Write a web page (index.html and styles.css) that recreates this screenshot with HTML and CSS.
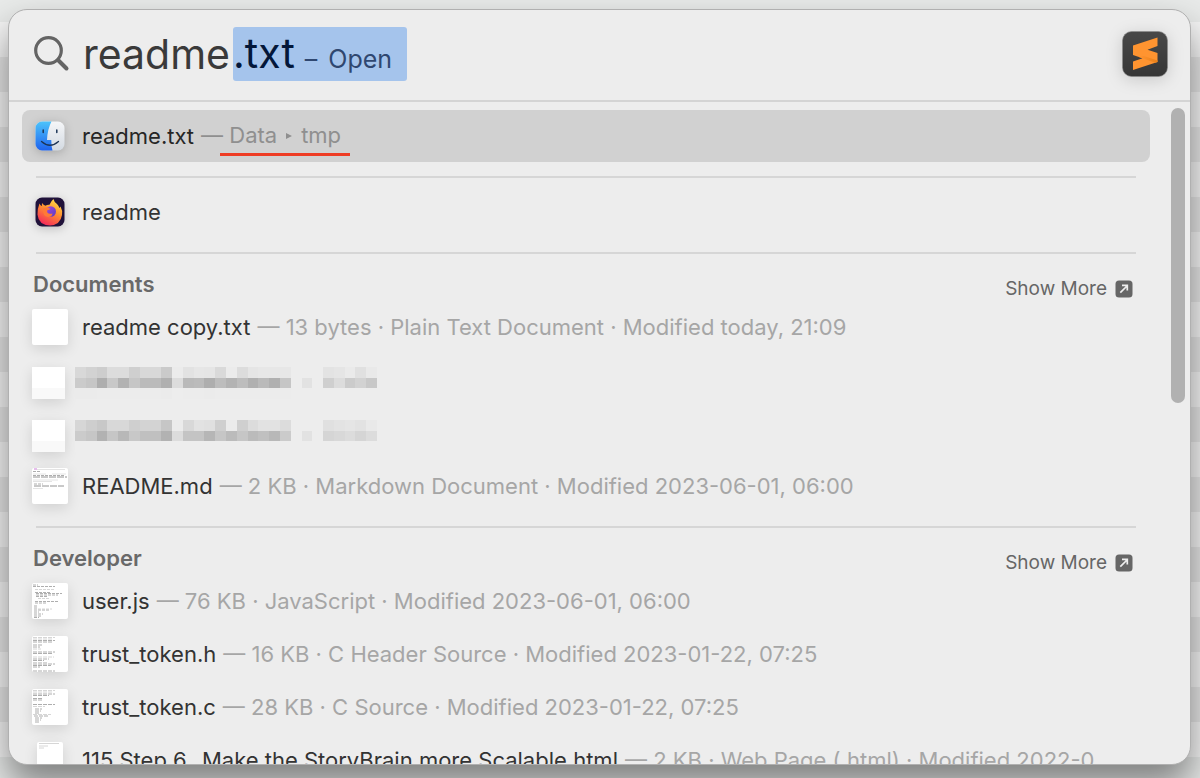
FILE: index.html
```
<!DOCTYPE html>
<html lang="en">
<head>
    <meta charset="UTF-8">
    <meta name="viewport" content="width=device-width, initial-scale=1.0">
    <title>Search</title>
    <link rel="stylesheet" href="styles.css">
</head>
<body>
    <svg class="defs" width="0" height="0">
        <symbol id="open-arrow" viewBox="0 0 18 18">
            <rect x="0.5" y="0.5" width="17" height="17" rx="3.5" fill="#666"/>
            <path d="M5.3 12.7 12 6M7 5.3h5.3v5.3" fill="none" stroke="#ededed" stroke-width="1.7"/>
        </symbol>
    </svg>
    <main class="panel">
        <div class="search-bar">
            <svg class="search-icon" viewBox="0 0 36 36">
                <circle cx="14.5" cy="14.5" r="12.8" fill="none" stroke="#646464" stroke-width="3.2"/>
                <path d="M24.5 24.5 32.500 32.500" stroke="#646464" stroke-width="4" stroke-linecap="round"/>
            </svg>
            <label class="query">
                <input type="text" class="query-input" value="readme" aria-label="Search">
                <span class="completion">.txt<span class="completion-action"><span>–</span><span>Open</span></span></span>
            </label>
            <svg class="app-icon" viewBox="0 0 46 46">
                <defs>
                    <linearGradient id="app-bg" x1="0" y1="0" x2="0" y2="1">
                        <stop offset="0" stop-color="#484848"/>
                        <stop offset="1" stop-color="#363636"/>
                    </linearGradient>
                    <linearGradient id="app-fold" x1="0" y1="0" x2="1" y2="0">
                        <stop offset="0" stop-color="#ff9430"/>
                        <stop offset="1" stop-color="#ea8018"/>
                    </linearGradient>
                </defs>
                <rect x="0.5" y="0.5" width="45" height="45" rx="9" fill="url(#app-bg)" stroke="#8a8a8a" stroke-width="0.6"/>
                <path d="M11 14.500 35.500 6.500V15L25.500 18.700 35.500 22V31L11 39V30.500L20.500 27.300 11 24z" fill="#ff9430"/>
                <path d="M17 26 21 24.800 35.500 29.500V31L33 31.800z" fill="url(#app-fold)"/>
            </svg>
        </div>

        <div class="results">
            <div class="row selected">
                <svg class="icon" viewBox="0 0 36 36">
                    <defs>
                        <linearGradient id="finder-blue" x1="0" y1="0" x2="0" y2="1">
                            <stop offset="0" stop-color="#4cc3fb"/>
                            <stop offset="1" stop-color="#1f63ee"/>
                        </linearGradient>
                        <linearGradient id="finder-white" x1="0" y1="0" x2="0" y2="1">
                            <stop offset="0" stop-color="#f5f6f8"/>
                            <stop offset="1" stop-color="#d3dae2"/>
                        </linearGradient>
                    </defs>
                    <rect x="3.5" y="3.5" width="29" height="29" rx="6.5" fill="url(#finder-white)"/>
                    <path d="M19.5 3.5H10a6.5 6.5 0 0 0-6.5 6.5v16a6.5 6.5 0 0 0 6.5 6.5h10.5q-1.300-4.500-1.200-10.500h-4.300q.5-11 4.500-18.500z" fill="url(#finder-blue)"/>
                    <path d="M11.200 12v2.400M24.800 12v2.400" stroke="#1d3557" stroke-width="1.500" stroke-linecap="round"/>
                    <path d="M9.500 23.500q8.500 7.500 17 0" fill="none" stroke="#1d3557" stroke-width="1.300" stroke-linecap="round"/>
                </svg>
                <span class="name">readme.txt</span>
                <span class="meta">— <span class="path">Data<svg class="path-arrow" viewBox="0 0 8 8"><path d="M1 1 7 4 1 7z" fill="#8f8f8f"/></svg>tmp</span></span>
            </div>
            <hr class="divider">
            <div class="row">
                <svg class="icon" viewBox="0 0 36 36">
                    <defs>
                        <linearGradient id="fox-flame" x1="0.8" y1="0" x2="0.3" y2="1">
                            <stop offset="0" stop-color="#ffe14a"/>
                            <stop offset="0.45" stop-color="#ff9130"/>
                            <stop offset="1" stop-color="#f5275c"/>
                        </linearGradient>
                        <linearGradient id="fox-globe" x1="0" y1="0" x2="1" y2="1">
                            <stop offset="0" stop-color="#a54be0"/>
                            <stop offset="1" stop-color="#5a3bc4"/>
                        </linearGradient>
                    </defs>
                    <rect x="3.5" y="3.5" width="29" height="29" rx="6.5" fill="#20123a"/>
                    <path d="M7.500 9.500q.8 2 2.500 2.500-.2-1.500 0-3 1.500 2.200 3.500 2.700 1.500-1.200 4-1 1.500-3.700 4-5.700.5 3 3.500 5 1.500 1.500 2.500 4l1-1.500q2.300 4 1.500 8.500-1.500 9.800-12 10.500-11.500-.5-12.500-11-.2-5.800 2-11z" fill="url(#fox-flame)"/>
                    <circle cx="18.800" cy="17.500" r="5.200" fill="url(#fox-globe)"/>
                    <path d="M11 14.500q4-2 7.500.5-1.500.8-3 1-.8 1.500 0 2.700 1.500 1.800 5 .8-.5 3.500-4.500 3.500-5.500-.5-5-8.500z" fill="#ff7a36"/>
                </svg>
                <span class="name">readme</span>
            </div>
            <hr class="divider">

            <section>
                <div class="section-head">
                    <h2>Documents</h2>
                    <button type="button" class="show-more">Show More <svg viewBox="0 0 18 18"><use href="#open-arrow"/></svg></button>
                </div>
                <div class="rows">
                    <div class="row">
                        <div class="thumb"></div>
                        <span class="name">readme copy.txt</span>
                        <span class="meta">— 13 bytes · Plain Text Document · Modified today, 21:09</span>
                    </div>
                    <div class="row redacted">
                        <div class="thumb-blocks"></div>
                        <svg class="blocks" viewBox="0 0 28 3" preserveAspectRatio="none" shape-rendering="crispEdges"></svg>
                    </div>
                    <div class="row redacted">
                        <div class="thumb-blocks"></div>
                        <svg class="blocks" viewBox="0 0 28 3" preserveAspectRatio="none" shape-rendering="crispEdges"></svg>
                    </div>
                    <div class="row">
                        <svg class="thumb" viewBox="0 0 36 36" fill="none" stroke="#777" stroke-width="0.8">
                            <path d="M2 1h3" stroke="#c05bd0"/>
                            <path d="M5 1.500h28M1 6h13M20 6h14M1 12h25M1 13.500h19M1 20.500h10" stroke="#ddd"/>
                            <path d="M1 3.500h7M1 7.500h32M2 16h9" stroke="#999" stroke-dasharray="3 1"/>
                            <path d="M1 9h34M2 18h30" stroke-dasharray="7 1"/>
                        </svg>
                        <span class="name">README.md</span>
                        <span class="meta">— 2 KB · Markdown Document · Modified 2023-06-01, 06:00</span>
                    </div>
                </div>
            </section>
            <hr class="divider">

            <section>
                <div class="section-head">
                    <h2>Developer</h2>
                    <button type="button" class="show-more">Show More <svg viewBox="0 0 18 18"><use href="#open-arrow"/></svg></button>
                </div>
                <div class="rows">
                    <div class="row">
                        <svg class="thumb" viewBox="0 0 36 36" fill="none" stroke="#999" stroke-width="0.8" stroke-dasharray="3 1">
                            <path d="M1 2h5M1 3.500h22M3 9.500h16M4 10.500h26M4 12h22M4 13.500h12M3 18.500h24M3 20h12M2 23h4M2 25h4M2 27h16M2 29h5M2 31h9M2 33h8M2 34.500h5"/>
                            <path d="M3 6.500h20M6 15.500h12M6 26h14" stroke="#ccc"/>
                        </svg>
                        <span class="name">user.js</span>
                        <span class="meta">— 76 KB · JavaScript · Modified 2023-06-01, 06:00</span>
                    </div>
                    <div class="row">
                        <svg class="thumb" viewBox="0 0 36 36" fill="none" stroke="#999" stroke-width="0.8" stroke-dasharray="4 1">
                            <path d="M1 4.500h22M1 6h20M1 9h9M1 11h7M1 16h22M1 17.500h20M1 23h16M1 24.500h11M1 28h22M1 29.500h18M1 31h7M1 35h22"/>
                            <path d="M1 1.500h22M1 3h20M1 13h8M1 21h21M1 26.500h15" stroke="#ccc"/>
                        </svg>
                        <span class="name">trust_token.h</span>
                        <span class="meta">— 16 KB · C Header Source · Modified 2023-01-22, 07:25</span>
                    </div>
                    <div class="row">
                        <svg class="thumb" viewBox="0 0 36 36" fill="none" stroke="#999" stroke-width="0.8" stroke-dasharray="4 1">
                            <path d="M1 5h22M1 6.500h16M1 9.500h9M1 11h9M1 15.500h22M3 20h7M3 22h6M3 24h4M2 27h15M3 29h7M3 31h6M3 33h4"/>
                            <path d="M1 1.500h22M1 3h20M1 17.500h12M1 25.500h18" stroke="#ccc"/>
                        </svg>
                        <span class="name">trust_token.c</span>
                        <span class="meta">— 28 KB · C Source · Modified 2023-01-22, 07:25</span>
                    </div>
                    <div class="row">
                        <svg class="thumb thumb-narrow" viewBox="0 0 26 36" fill="none" stroke="#ccc" stroke-width="0.8">
                            <path d="M2 1.500h20M2 4h9M2 6h5"/>
                        </svg>
                        <span class="name">115 Step 6_ Make the StoryBrain more Scalable.html</span>
                        <span class="meta">— 2 KB · Web Page (.html) · Modified 2022-0</span>
                    </div>
                </div>
            </section>
        </div>
        <div class="scroll-thumb"></div>
    </main>
    <script>
        // grey levels of the censored names, top / middle / bottom strip
        const shades = [
            [
                'd8 d2 cd dc dc cf d8 d8 ca eb e2 e6 e5 d9 eb dc e5 e7 e7 e7 ed ed ed e3 e5 ea e0 e9',
                'cb c6 ae c8 b2 c6 bb bb b0 dc b9 bb ae bd b3 bd b0 ba b0 c6 ed e2 ed cf dc cb d2 c8',
                'eb eb ec ec ec ec ec ec eb ed ec ec eb ec ec ec ec ec ec ec ed ed ed ed ed ed ed ed'
            ],
            [
                'd6 ce c8 d8 d8 cf d3 d3 c6 eb d8 e2 e0 cf eb cf dc e2 e2 dc ed ed ed e0 e3 e5 e2 e9',
                'cb c6 b2 c6 b8 c8 c0 c0 b2 dc c4 c4 b6 c6 bb c6 bb c0 b8 cb ed e2 ed d5 d8 dc d5 dc',
                'ed ed ed ed ed ed ed ed ed ed ed ed ed ed ed ed ed ed ed ed ed ed ed ed ed ed ed ed'
            ]
        ];
        document.querySelectorAll('.blocks').forEach((svg, n) => {
            shades[n].forEach((line, y) => {
                line.split(' ').forEach((c, x) => {
                    const rect = document.createElementNS('http://www.w3.org/2000/svg', 'rect');
                    rect.setAttribute('x', x);
                    rect.setAttribute('y', y);
                    rect.setAttribute('width', 1);
                    rect.setAttribute('height', 1);
                    rect.setAttribute('fill', '#' + c + c + c);
                    svg.appendChild(rect);
                });
            });
        });
    </script>
</body>
</html>
```
FILE: styles.css
```
* {
    box-sizing: border-box;
}
body {
    margin: 0;
    height: 100vh;
    padding: 9px 9px 13px 8px;
    overflow: hidden;
    font-family: Inter, 'Liberation Sans', sans-serif;
    font-size: 22px;
    color: #333;
    background:
        linear-gradient(#e8eae9, #e8eae9) top / 100% 22px no-repeat,
        linear-gradient(#e6e8e7, #e6e8e7) bottom / 100% 21px no-repeat,
        repeating-linear-gradient(#f5f5f5 22px, #f5f5f5 57px, #e6e6e6 57px, #e6e6e6 92px);
}
.defs {
    position: absolute;
}
.panel {
    position: relative;
    display: flex;
    flex-direction: column;
    height: 100%;
    overflow: hidden;
    background-color: #ededed;
    border: 1px solid #b0b0b0;
    border-radius: 19px;
    box-shadow: 0 20px 36px rgba(0, 0, 0, 0.45);
}
.search-bar {
    display: flex;
    flex: none;
    align-items: center;
    height: 92px;
    padding: 0 22px 2px 25px;
    border-bottom: 2px solid #d4d4d4;
}
.search-icon {
    width: 36px;
    height: 36px;
    margin-right: 13px;
}
.query {
    display: flex;
    flex: 1;
    align-items: center;
    font-size: 41px;
}
.query-input {
    width: 150px;
    padding: 0;
    border: none;
    outline: none;
    background: none;
    font: inherit;
    color: #3a3a3a;
}
.completion {
    display: flex;
    align-items: baseline;
    height: 54px;
    padding-right: 15px;
    line-height: 52px;
    border-radius: 3px;
    background-color: #a5c4ec;
    color: #03173a;
}
.completion-action {
    display: flex;
    gap: 11px;
    margin-left: 10px;
    font-size: 25px;
    color: #2f4770;
}
.app-icon {
    width: 46px;
    height: 46px;
    filter: drop-shadow(0 3px 8px rgba(0, 0, 0, 0.15));
}
.results {
    flex: 1;
    min-height: 0;
    overflow: hidden;
    padding: 8px 40px 0 13px;
}
.row {
    display: flex;
    align-items: center;
    height: 52px;
    padding: 0 10px;
    border-radius: 8px;
    white-space: nowrap;
}
.rows {
    display: flex;
    flex-direction: column;
    gap: 1px;
}
.selected {
    background-color: #d1d1d1;
}
.icon {
    width: 36px;
    height: 36px;
    margin-right: 14px;
    filter: drop-shadow(0 2px 5px rgba(0, 0, 0, 0.2));
}
.thumb {
    flex: none;
    width: 36px;
    height: 36px;
    margin-right: 14px;
    border-radius: 2px;
    background-color: #fff;
    box-shadow: 0 4px 14px rgba(0, 0, 0, 0.12);
}
.thumb-narrow {
    width: 26px;
    margin: 0 19px 0 5px;
}
.name {
    margin-right: 7px;
    color: #333;
}
.meta {
    color: #a6a6a6;
}
.selected .name {
    color: #262626;
}
.selected .meta {
    color: #8f8f8f;
}
.path {
    display: inline-block;
    padding: 0 9px;
    margin: 0 -9px;
    border-bottom: 3px solid #ee3c24;
    line-height: 36px;
}
.path-arrow {
    width: 8px;
    height: 8px;
    margin: 0 8px;
    vertical-align: 3px;
}
.divider {
    height: 2px;
    margin: 14px 14px 8px;
    border: none;
    background-color: #d6d6d6;
}
.divider:has(+ section) {
    margin-bottom: 0;
}
.section-head {
    display: flex;
    align-items: center;
    justify-content: space-between;
    height: 47px;
    padding: 12px 17px 0 11px;
}
h2 {
    margin: 0;
    font-size: 22px;
    font-weight: 600;
    color: #696969;
}
.show-more {
    display: flex;
    align-items: center;
    gap: 8px;
    margin-top: 10px;
    padding: 0;
    border: none;
    background: none;
    font: inherit;
    font-size: 19px;
    color: #666;
}
.show-more svg {
    width: 18px;
    height: 18px;
}
.redacted {
    padding-top: 6px;
}
.thumb-blocks {
    width: 33px;
    height: 32px;
    margin-right: 10px;
    background: linear-gradient(#fff 21px, #f9f9f9 21px);
    box-shadow: 0 4px 14px rgba(0, 0, 0, 0.12);
}
.blocks {
    width: 302px;
    height: 32px;
}
.scroll-thumb {
    position: absolute;
    top: 98px;
    right: 5px;
    width: 14px;
    height: 295px;
    border-radius: 7px;
    background-color: #b1b1b1;
}
```
